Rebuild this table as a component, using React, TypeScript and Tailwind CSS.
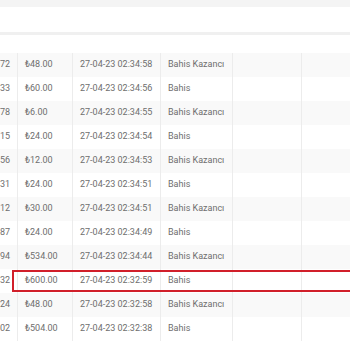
const rows = [
  { id: "72", amount: "₺48.00", date: "27-04-23 02:34:58", type: "Bahis Kazancı" },
  { id: "33", amount: "₺60.00", date: "27-04-23 02:34:56", type: "Bahis" },
  { id: "78", amount: "₺6.00", date: "27-04-23 02:34:55", type: "Bahis Kazancı" },
  { id: "15", amount: "₺24.00", date: "27-04-23 02:34:54", type: "Bahis" },
  { id: "56", amount: "₺12.00", date: "27-04-23 02:34:53", type: "Bahis Kazancı" },
  { id: "31", amount: "₺24.00", date: "27-04-23 02:34:51", type: "Bahis" },
  { id: "12", amount: "₺30.00", date: "27-04-23 02:34:51", type: "Bahis Kazancı" },
  { id: "87", amount: "₺24.00", date: "27-04-23 02:34:49", type: "Bahis" },
  { id: "94", amount: "₺534.00", date: "27-04-23 02:34:44", type: "Bahis Kazancı" },
  { id: "32", amount: "₺600.00", date: "27-04-23 02:32:59", type: "Bahis", marked: true },
  { id: "24", amount: "₺48.00", date: "27-04-23 02:32:58", type: "Bahis Kazancı" },
  { id: "02", amount: "₺504.00", date: "27-04-23 02:32:38", type: "Bahis" },
];

export default function App() {
  return (
    <div
      className="w-[350px] h-[350px] overflow-hidden bg-white text-[#6e6e6e] text-[9px]"
      style={{ fontFamily: "Roboto, 'Liberation Sans', sans-serif" }}
    >
      {/* top bars */}
      <div className="h-[7px] bg-[#f4f4f4]" />
      <div className="h-[25px] bg-white" />
      <div className="h-[3px] bg-[#f0f0f0]" />
      <div className="h-[18px] bg-white" />

      {/* table body */}
      <div className="flex flex-col">
        {rows.map((r, i) => (
          <div
            key={i}
            className={`relative grid grid-cols-[18px_55px_88px_72px_69px_1fr] h-[24px] items-stretch ${
              i % 2 === 0 ? "bg-[#f9f9f9]" : "bg-white"
            }`}
          >
            <div className="flex items-center justify-end pr-[7px] border-r border-[#ececec] overflow-hidden whitespace-nowrap">
              {r.id}
            </div>
            <div className="flex items-center pl-[7px] border-r border-[#ececec] whitespace-nowrap">
              {r.amount}
            </div>
            <div className="flex items-center pl-[7px] border-r border-[#ececec] whitespace-nowrap">
              {r.date}
            </div>
            <div className="flex items-center pl-[7px] border-r border-[#ececec] whitespace-nowrap">
              {r.type}
            </div>
            <div className="border-r border-[#ececec]" />
            <div />
            {r.marked && (
              <div className="absolute left-[12px] -right-[4px] top-[1px] bottom-[1px] border-2 border-[#d11f2a]" />
            )}
          </div>
        ))}
      </div>
    </div>
  );
}
